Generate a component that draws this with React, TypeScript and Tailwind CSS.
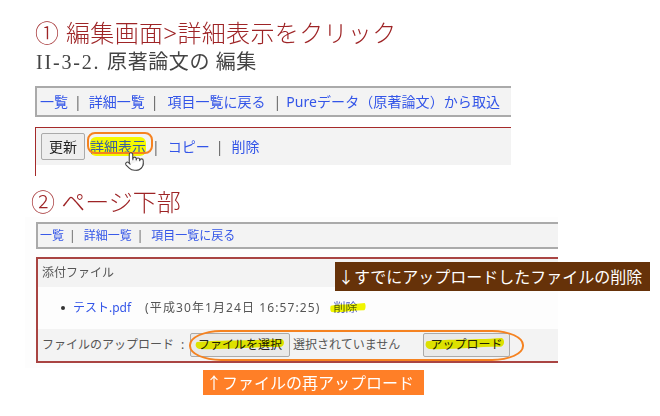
import { Pointer } from 'lucide-react'

const sans = "font-['Noto_Sans','Noto_Sans_CJK_JP',sans-serif]"

function Sep() {
  return <span className="text-[#666]">|</span>
}

function Step({ children, className }: { children: string; className: string }) {
  return (
    <h2 className={`text-[24px] leading-[30px] font-light text-[#9e2426] whitespace-nowrap ${className}`}>{children}</h2>
  )
}

// hand drawn marker stroke, multiplied over the text it sits on
function Marker({ className }: { className: string }) {
  return (
    <svg className={`absolute mix-blend-multiply ${className}`} viewBox="0 0 100 12" preserveAspectRatio="none" aria-hidden="true">
      <path d="M2 4C20 2 60 3 96 1C100 2 100 8 95 9C60 9 30 12 5 11C0 10 0 6 2 4Z" fill="#f2f700" />
    </svg>
  )
}

export default function App() {
  return (
    <div className={`relative h-[416px] w-[660px] overflow-hidden bg-white ${sans}`}>
      <div className="pt-[18px]">
        <Step className="ml-[35px] tracking-[0.35px]">① 編集画面&gt;詳細表示をクリック</Step>
        <h1 className="ml-[36px] mt-[1px] whitespace-nowrap font-['Liberation_Serif','Noto_Sans_CJK_JP',serif] text-[20px] leading-[26px] tracking-[0.6px] text-[#444]">
          <span className="tracking-[1.8px]">II-3-2. </span>原著論文の 編集
        </h1>

        <nav className="ml-[35px] mt-[11px] flex h-[31px] w-[476px] items-center border-y-2 border-l-2 border-[#aaa] bg-[#f3f3f3] pb-[1px] pl-[3px] text-[14px] text-[#3355e8] whitespace-nowrap">
          <a>一覧</a>
          <span className="ml-[6px]"><Sep /></span>
          <a className="ml-[7px]">詳細一覧</a>
          <span className="ml-[6px]"><Sep /></span>
          <a className="ml-[9px]">項目一覧に戻る</a>
          <span className="ml-[8px]"><Sep /></span>
          <a className="ml-[5px] tracking-[0.08px]">Pureデータ（原著論文）から取込</a>
        </nav>

        <div className="ml-[35px] mt-[10px] h-[49px] w-[476px] border-t border-l border-[#a52a2a]">
          <div className="flex h-[37px] items-center bg-[#f3f3f3] pl-[5px] text-[14px] whitespace-nowrap">
            <button className="h-[27px] w-[44px] rounded-[2px] border border-[#aaa] bg-[#eee] text-[14px] text-[#222]">更新</button>
            <span className="relative ml-[5px] w-[57px]">
              <span className="rounded-[6px] bg-[#f4f900] text-[#3a5fa0]">詳細表示</span>
              <span className="absolute -top-[4px] -left-[3px] h-[22px] w-[66px] rounded-[8px] border-2 border-[#f58220]" />
              <Pointer className="absolute top-[15px] left-[34px] fill-white text-[#444]" size={21} strokeWidth={1.25} />
            </span>
            <span className="ml-[5px]"><Sep /></span>
            <a className="ml-[8px] text-[#3355e8]">コピー</a>
            <span className="ml-[6px]"><Sep /></span>
            <a className="ml-[8px] text-[#3355e8]">削除</a>
          </div>
        </div>

        <Step className="ml-[31px] mt-[11px]">② ページ下部</Step>

        <div className="ml-[25px] h-[151px] w-[533px] bg-[#fdfdfd] pt-[5px] pl-[11px]">
          <nav className="flex h-[27px] w-[522px] items-center border-y-2 border-l-2 border-[#aaa] bg-[#f3f3f3] pl-[2px] text-[12px] text-[#3355e8] whitespace-nowrap">
            <a>一覧</a>
            <span className="ml-[5px]"><Sep /></span>
            <a className="ml-[8px]">詳細一覧</a>
            <span className="ml-[5px]"><Sep /></span>
            <a className="ml-[8px]">項目一覧に戻る</a>
          </nav>

          <section className="mt-[8px] h-[106px] w-[522px] border-y-2 border-l-2 border-[#a94442] text-[12px] whitespace-nowrap text-[#555]">
            <div className="flex h-[28px] items-center bg-[#f3f3f3] pl-[4px]">添付ファイル</div>
            <ul className="flex h-[42px] items-center pl-[23px]">
              <li className="flex items-center">
                <span className="h-[4px] w-[4px] rounded-full bg-[#333]" />
                <a className="ml-[8px] text-[#3355e8]">テスト.pdf</a>
                <span className="ml-[14px] tracking-[1.1px]">(平成30年1月24日 16:57:25)</span>
                <a className="relative ml-[13px] text-[#5560c0]">
                  削除
                  <Marker className="top-[3px] -left-[3px] h-[11px] w-[36px]" />
                </a>
              </li>
            </ul>
            <div className="relative flex h-[32px] items-center bg-[#f3f3f3] pl-[4px]">
              <span className="w-[148px]">ファイルのアップロード<span className="ml-[7px]">:</span></span>
              <button className="h-[24px] w-[100px] rounded-[2px] border border-[#aaa] bg-[#e9e9e9] text-[#222]">
                <span className="relative">
                  ファイルを選択
                  <Marker className="top-[2px] -left-[3px] h-[12px] w-[90px]" />
                </span>
              </button>
              <span className="ml-[3px] w-[130px]">選択されていません</span>
              <button className="h-[24px] w-[87px] rounded-[2px] border border-[#aaa] bg-[#e9e9e9] text-[#222]">
                <span className="relative">
                  アップロード
                  <Marker className="top-[1px] -left-[5px] h-[13px] w-[80px]" />
                </span>
              </button>
              <span className="absolute top-[1px] left-[151px] h-[31px] w-[335px] rounded-[32px/15px] border-2 border-[#f58220]" />
            </div>
          </section>
        </div>

        <div className="ml-[203px] mt-[2px] flex h-[25px] w-[221px] items-center bg-[#ff7f27] pl-[3px] text-[16px] whitespace-nowrap text-white">
          ↑ファイルの再アップロード
        </div>
      </div>

      <div className="absolute top-[262px] left-[335px] flex h-[29px] w-[315px] items-center bg-[#663209] pl-[3px] text-[16px] whitespace-nowrap text-white">
        ↓すでにアップロードしたファイルの削除
      </div>
    </div>
  )
}
